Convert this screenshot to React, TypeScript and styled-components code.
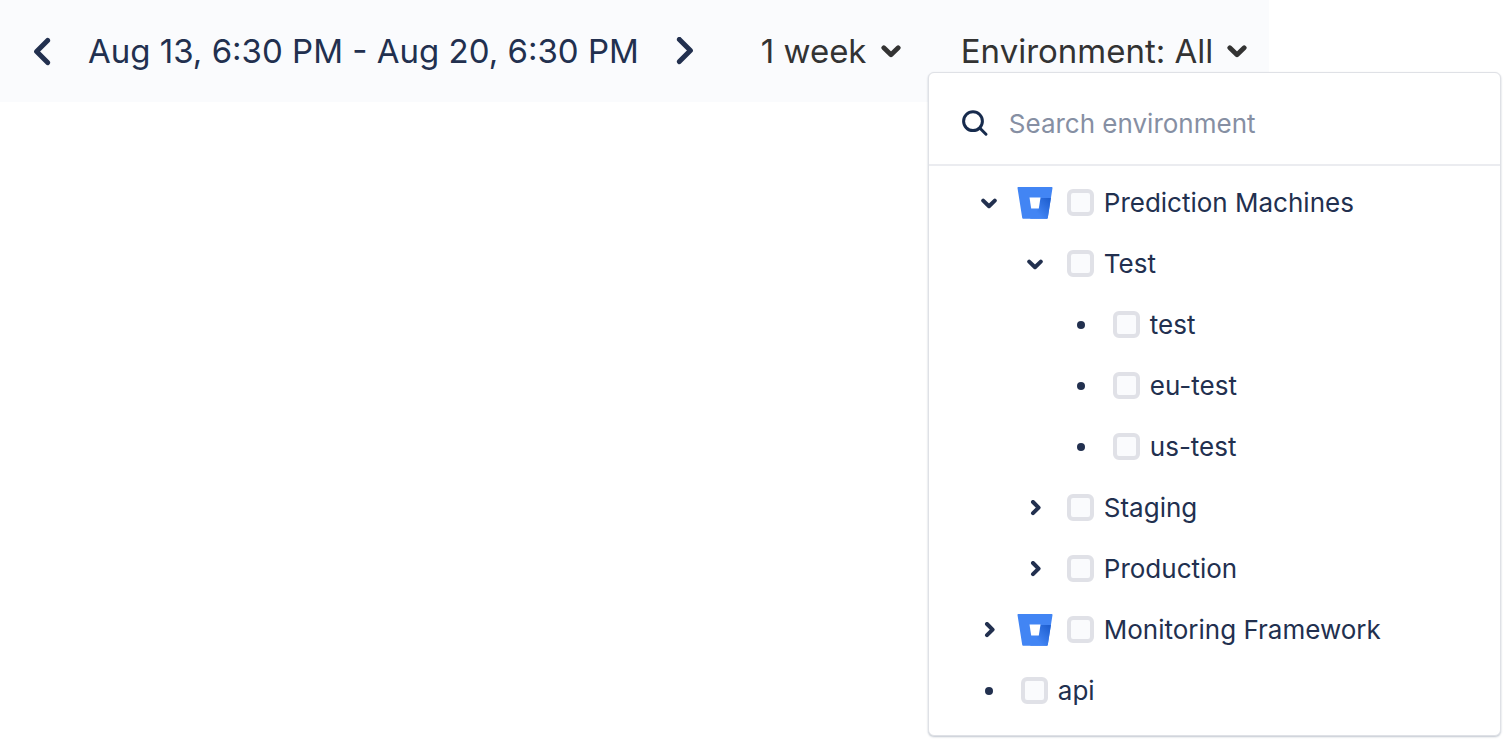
import { useState } from 'react';
import styled, { createGlobalStyle } from 'styled-components';

const GlobalStyle = createGlobalStyle`
  *, *::before, *::after { box-sizing: border-box; }
  body {
    margin: 0;
    background: #fff;
    color: #22304f;
    font-family: Inter, 'Liberation Sans', sans-serif;
    font-size: 26px;
  }
  button, input, select { font: inherit; color: inherit; }
`;

const Page = styled.main`
  min-height: 100vh;
`;

const Toolbar = styled.header`
  display: flex;
  align-items: center;
  width: fit-content;
  padding: 30px 22px;
  background: #fafbfd;
  font-size: 33px;
  line-height: 42px;
  white-space: nowrap;
`;

const PlainButton = styled.button`
  display: flex;
  align-items: center;
  justify-content: center;
  padding: 0;
  border: 0;
  background: none;
  cursor: pointer;
`;

const StepButton = styled(PlainButton)`
  width: 40px;
  height: 42px;
`;

const DateRange = styled.span`
  margin: 0 26px;
`;

const FilterGroup = styled.div`
  display: flex;
  gap: 60px;
  margin-left: 56px;
  color: #333;
`;

const PeriodField = styled.label`
  display: grid;
  align-items: center;

  > * { grid-area: 1 / 1; }
  > svg { justify-self: end; pointer-events: none; }
`;

const PeriodSelect = styled.select`
  height: 42px;
  padding: 0 34px 0 0;
  border: 0;
  appearance: none;
  background: none;
  line-height: 42px;
`;

const EnvironmentFilter = styled.div`
  position: relative;
`;

const FilterButton = styled(PlainButton)`
  height: 42px;
  gap: 14px;
`;

const Panel = styled.section`
  position: absolute;
  top: 100%;
  left: -33px;
  width: 573px;
  border: 1px solid #dfe1e6;
  border-radius: 6px;
  background: #fff;
  box-shadow: 0 1px 2px rgba(9, 30, 66, 0.25);
  color: #22304f;
  font-size: 26px;
`;

const SearchBar = styled.label`
  display: flex;
  align-items: center;
  gap: 20px;
  height: 93px;
  padding: 11px 32px 0;
  border-bottom: 2px solid #ebecf0;
`;

const SearchInput = styled.input`
  flex: 1;
  min-width: 0;
  padding: 0;
  border: 0;
  outline: 0;
  background: none;

  &::placeholder { color: #868fa3; opacity: 1; }
`;

const Tree = styled.ul`
  margin: 0;
  padding: 6px 0 14px 37px;
  list-style: none;
`;

const Branch = styled.ul`
  margin: 0;
  padding: 0 0 0 46px;
  list-style: none;
`;

const Row = styled.div`
  display: flex;
  align-items: center;
  height: 61px;
`;

const Slot = styled.span`
  display: flex;
  flex: none;
  align-items: center;
  justify-content: center;
  width: 46px;
`;

const ToggleButton = styled(PlainButton)`
  width: 46px;
  height: 46px;
`;

const Bullet = styled.span`
  width: 8px;
  height: 8px;
  border-radius: 50%;
  background: #22304f;
`;

const CheckLabel = styled.label`
  display: flex;
  align-items: center;
  cursor: pointer;
`;

const Checkbox = styled.input`
  width: 27px;
  height: 27px;
  margin: 0;
  border: 4px solid #e0e1e7;
  border-radius: 6px;
  appearance: none;
  background: #fafbfd;

  &:checked { border-color: #0052cc; background: #0052cc; }
`;

type Direction = 'left' | 'right';

const chevronPaths: Record<Direction, string> = {
  left: 'M14.6 3.4 3.6 14.5l11 11.1',
  right: 'M3.4 2.4l11 11.1-11 11.1',
};

function StepChevron({ direction }: { direction: Direction }) {
  return (
    <svg width="18" height="29" viewBox="0 0 18 29" fill="none" stroke="currentColor" strokeWidth="5" strokeLinecap="round" strokeLinejoin="round" aria-hidden="true">
      <path d={chevronPaths[direction]} />
    </svg>
  );
}

function MenuChevron() {
  return (
    <svg width="20" height="14" viewBox="0 0 20 14" fill="none" stroke="currentColor" strokeWidth="4.8" strokeLinecap="round" strokeLinejoin="round" aria-hidden="true">
      <path d="M2.8 3.8 10 10.8l7.200-7" />
    </svg>
  );
}

function TreeChevron({ open }: { open: boolean }) {
  return (
    <svg width="16" height="16" viewBox="0 0 16 16" fill="none" stroke="currentColor" strokeWidth="4" strokeLinecap="round" strokeLinejoin="round" aria-hidden="true">
      <path d={open ? 'M2.2 5.6 8 11.2l5.8-5.6' : 'M6 2 11.6 7.600 6 13.200'} />
    </svg>
  );
}

function SearchIcon() {
  return (
    <svg width="28" height="28" viewBox="0 0 28 28" fill="none" stroke="#172b4d" strokeWidth="3" strokeLinecap="round" aria-hidden="true">
      <circle cx="12" cy="11.2" r="9.400" />
      <path d="m19 18.200 6 6" />
    </svg>
  );
}

function RepositoryIcon({ id }: { id: string }) {
  return (
    <svg width="36" height="32" viewBox="0 0 36 32" aria-hidden="true">
      <defs>
        <linearGradient id={id} x1="34" y1="11" x2="19" y2="25" gradientUnits="userSpaceOnUse">
          <stop offset="0.1" stopColor="#1f5fd0" />
          <stop offset="1" stopColor="#4285f4" />
        </linearGradient>
      </defs>
      <path d="M1.4 0h33.2c.6 0 1 .5.9 1.1L30.8 30.7c-.1.7-.6 1.1-1.2 1.1H6.4c-.6 0-1.1-.4-1.2-1.1L.5 1.1C.4.5.8 0 1.4 0Z" fill="#4285f4" />
      <path d="M23.5 11h10.4l-3.1 19.7c-.1.7-.6 1.1-1.2 1.1H13l9-10.8Z" fill={`url(#${id})`} />
      <path d="M12.5 10.5h11L21.8 21.5h-7.6Z" fill="#fff" />
    </svg>
  );
}

interface EnvironmentNode {
  id: string;
  name: string;
  repository?: boolean;
  expandable?: boolean;
  children?: EnvironmentNode[];
}

const environments: EnvironmentNode[] = [
  {
    id: 'prediction',
    name: 'Prediction Machines',
    repository: true,
    expandable: true,
    children: [
      {
        id: 'prediction-test',
        name: 'Test',
        expandable: true,
        children: [
          { id: 'test', name: 'test' },
          { id: 'eu-test', name: 'eu-test' },
          { id: 'us-test', name: 'us-test' },
        ],
      },
      { id: 'staging', name: 'Staging', expandable: true },
      { id: 'production', name: 'Production', expandable: true },
    ],
  },
  { id: 'monitoring', name: 'Monitoring Framework', repository: true, expandable: true },
  { id: 'api', name: 'api' },
];

function EnvironmentItem({ node }: { node: EnvironmentNode }) {
  const [open, setOpen] = useState(Boolean(node.children));

  return (
    <li>
      <Row>
        {node.expandable ? (
          <ToggleButton type="button" aria-label={`Toggle ${node.name}`} aria-expanded={open} onClick={() => setOpen(!open)}>
            <TreeChevron open={open} />
          </ToggleButton>
        ) : (
          <Slot><Bullet /></Slot>
        )}
        {node.repository && <Slot><RepositoryIcon id={`shade-${node.id}`} /></Slot>}
        <CheckLabel>
          <Slot><Checkbox type="checkbox" name={node.id} /></Slot>
          {node.name}
        </CheckLabel>
      </Row>
      {open && node.children && (
        <Branch>
          {node.children.map((child) => <EnvironmentItem key={child.id} node={child} />)}
        </Branch>
      )}
    </li>
  );
}

export default function App() {
  const [panelOpen, setPanelOpen] = useState(true);

  return (
    <Page>
      <GlobalStyle />
      <Toolbar>
        <StepButton type="button" aria-label="Previous period"><StepChevron direction="left" /></StepButton>
        <DateRange>Aug 13, 6:30 PM - Aug 20, 6:30 PM</DateRange>
        <StepButton type="button" aria-label="Next period"><StepChevron direction="right" /></StepButton>
        <FilterGroup>
          <PeriodField>
            <PeriodSelect aria-label="Period">
              <option>1 week</option>
            </PeriodSelect>
            <MenuChevron />
          </PeriodField>
          <EnvironmentFilter>
            <FilterButton type="button" aria-expanded={panelOpen} onClick={() => setPanelOpen(!panelOpen)}>
              Environment: All
              <MenuChevron />
            </FilterButton>
            {panelOpen && (
              <Panel aria-label="Environments">
                <SearchBar>
                  <SearchIcon />
                  <SearchInput type="text" placeholder="Search environment" aria-label="Search environment" />
                </SearchBar>
                <Tree>
                  {environments.map((node) => <EnvironmentItem key={node.id} node={node} />)}
                </Tree>
              </Panel>
            )}
          </EnvironmentFilter>
        </FilterGroup>
      </Toolbar>
    </Page>
  );
}
